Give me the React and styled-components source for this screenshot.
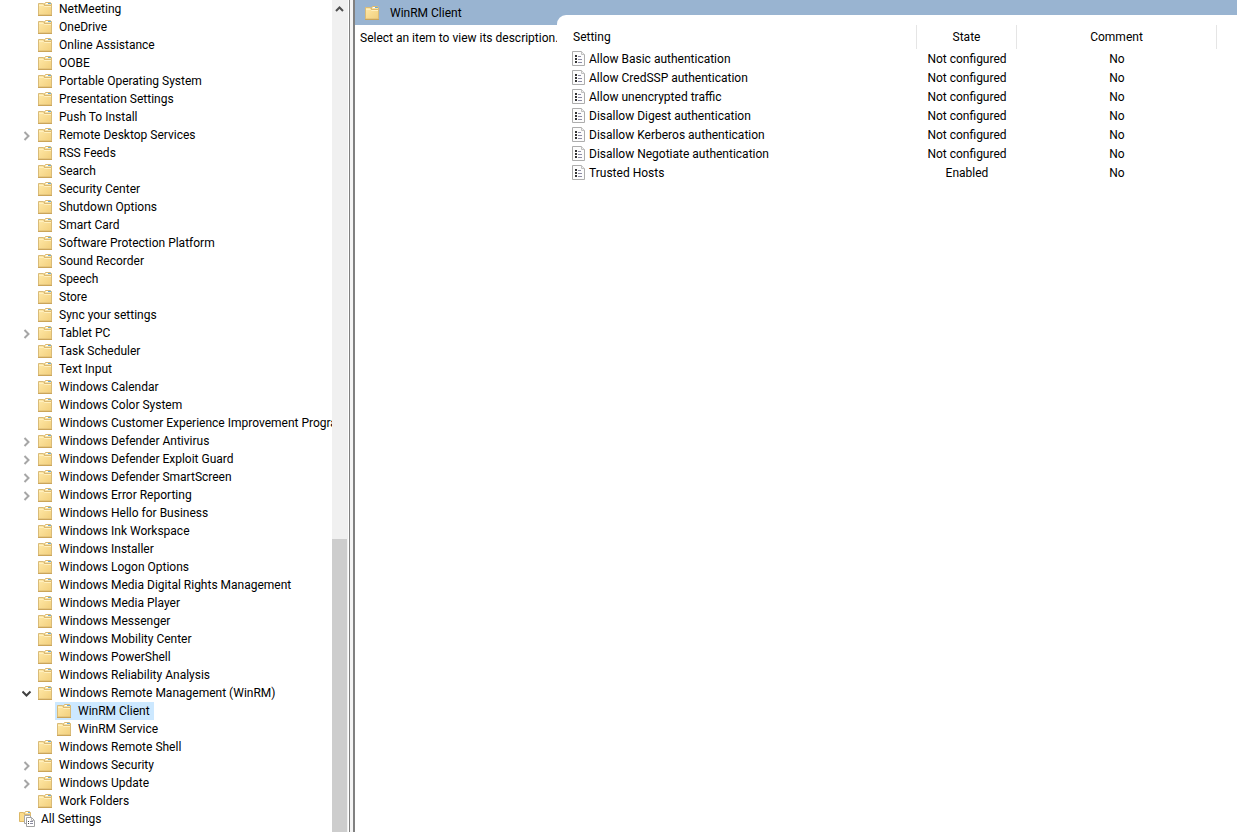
import React, {useState} from 'react';
import styled, {createGlobalStyle} from 'styled-components';

const theme = {
    text: '#000000',
    header: '#99b4d1',
    selected: '#cce8ff',
    track: '#f0f0f0',
    thumb: '#cdcdcd',
    divider: '#e5e5e5',
};

const GlobalStyle = createGlobalStyle`
  * {
    box-sizing: border-box;
  }

  body {
    margin: 0;
    background: white;
    color: ${theme.text};
    font-family: "Segoe UI", Roboto, "Open Sans", sans-serif;
    font-size: 12px;
    line-height: 18px;
  }

  button {
    padding: 0;
    border: none;
    background: none;
    color: inherit;
    font: inherit;
    text-align: left;
  }
`;

const Window = styled.div`
  display: flex;
  height: 100vh;
  overflow: hidden;
`;

const TreePane = styled.nav`
  display: flex;
  flex: 0 0 348px;
  min-width: 0;
`;

const TreeList = styled.ul`
  flex: 1;
  min-width: 0;
  margin: 0;
  padding: 0;
  list-style: none;
  overflow: hidden;
`;

const TreeRow = styled.li`
  display: flex;
  align-items: center;
  height: 18px;
  padding-left: ${({$level}) => $level * 19}px;
  white-space: nowrap;
`;

const Expander = styled.button`
  display: flex;
  align-items: center;
  flex: 0 0 17px;
  height: 18px;
  padding: 2px 0 0 3px;
`;

const ExpanderSpace = styled.span`
  flex: 0 0 17px;
`;

const TreeItem = styled.button`
  display: flex;
  align-items: center;
  flex-shrink: 0;
  gap: 6px;
  height: 18px;
  padding: 0 4px 0 2px;
  background: ${({$selected}) => $selected ? theme.selected : 'transparent'};
`;

const ScrollTrack = styled.div`
  display: flex;
  flex-direction: column;
  flex: 0 0 16px;
  padding-right: 1px;
  background: ${theme.track};
`;

const ScrollArrow = styled.button`
  display: flex;
  justify-content: center;
  align-items: center;
  height: 18px;
`;

const ScrollThumb = styled.div`
  flex: 1;
  margin-top: ${({$offset}) => $offset};
  background: ${theme.thumb};
`;

const Splitter = styled.div`
  flex: 0 0 6px;
  margin-left: 1px;
  border: solid #808080;
  border-width: 0 2px 0 1px;
  background: #f4f4f4;
`;

const DetailPane = styled.main`
  display: grid;
  grid-template-columns: 202px 1fr;
  grid-template-rows: 15px 10px 1fr;
  flex: 1;
  min-width: 0;
  background: linear-gradient(${theme.header} 25px, white 25px);
`;

const PaneTitle = styled.h1`
  display: flex;
  align-items: center;
  grid-area: 1 / 1 / 3 / 2;
  gap: 10px;
  margin: 0;
  padding-left: 10px;
  font-size: 12px;
  font-weight: 400;
`;

const Description = styled.p`
  grid-area: 3 / 1 / 4 / 2;
  margin: 0;
  padding: 4px 0 0 5px;
  white-space: nowrap;
`;

const SettingsPanel = styled.section`
  grid-area: 2 / 2 / 4 / 3;
  min-width: 0;
  padding-top: 10px;
  border-top-left-radius: 9px;
  background: white;
  overflow: hidden;
`;

const SettingsTable = styled.table`
  width: 660px;
  table-layout: fixed;
  border-collapse: separate;
  border-spacing: 0;
`;

const Column = styled.col`
  width: ${({$width}) => $width}px;
`;

const HeadCell = styled.th`
  height: 24px;
  padding: 0 0 0 ${({$first}) => $first ? 16 : 0}px;
  border-right: 1px solid ${theme.divider};
  font-weight: 400;
  text-align: ${({$first}) => $first ? 'left' : 'center'};
`;

const Cell = styled.td`
  height: 19px;
  padding: 0;
  text-align: center;
`;

const SettingName = styled.button`
  display: flex;
  align-items: center;
  gap: 4px;
  height: 19px;
  padding-left: 15px;
`;

const FolderIcon = () => (
    <svg width="15" height="14" viewBox="0 0 15 14" aria-hidden="true">
        <defs>
            <linearGradient id="folderFill" x1="0" y1="0" x2="1" y2="1">
                <stop offset="0" stopColor="#ffe9a8"/>
                <stop offset="1" stopColor="#f2cf7c"/>
            </linearGradient>
        </defs>
        <path d="M.5 13V1.5h5l1 2h7V13z" fill="url(#folderFill)" stroke="#d9bb78"/>
        <path d="M6.5 3.5v-2l1-1h5l1 1v2z" fill="#f8e3a6" stroke="#dcb970"/>
        <path d="M8 1.5h2" stroke="#fff"/>
        <path d="M10 1.5h3" stroke="#6cabd9"/>
        <path d="M1 3.5h4.5l1 1H13" fill="none" stroke="#fff0c0"/>
        <path d="M0 13.5h14" stroke="#cba55a"/>
    </svg>
);

const AllSettingsIcon = () => (
    <svg width="16" height="16" viewBox="0 0 16 16" aria-hidden="true">
        <path d="M.5 10.5v-9h4l1 2h6v7z" fill="#fbdc8c" stroke="#dcb866"/>
        <path d="M5.5 3.5v-2l1-1h4l1 1v2z" fill="#f8e3a6" stroke="#dcb970"/>
        <path d="M7 1.5h2" stroke="#fff"/>
        <path d="M9 1.5h2" stroke="#6cabd9"/>
        <path d="M5.5 12.5v-8h5l2 2v6z" fill="#fff" stroke="#a8a8a8"/>
        <path d="M7.5 15.5v-9h5l3 3v6z" fill="#fff" stroke="#a0a0a0"/>
        <path d="M12.5 6.5v3h3" fill="none" stroke="#b8b8b8"/>
        <path d="M9 10.5h1M9 12.5h1" stroke="#444"/>
        <path d="M11 10.5h3M11 12.5h3" stroke="#8b8ba0"/>
    </svg>
);

const PolicyIcon = () => (
    <svg width="13" height="15" viewBox="0 0 13 15" aria-hidden="true">
        <path d="M.5 14.5V.5h9l3 3v11z" fill="#fcfcfc" stroke="#adadad"/>
        <path d="M9.5.5v3h3" fill="#eee" stroke="#c0c0c0"/>
        <path d="M3 5h2M3 8h2M3 11h2" stroke="#333" strokeWidth="2"/>
        <path d="M6 5.5h3M6 8.5h4M6 11.5h4" stroke="#8c8ca5"/>
    </svg>
);

const ChevronIcon = ({open}) => (
    <svg width="10" height="10" viewBox="0 0 10 10" fill="none" strokeWidth="2" aria-hidden="true">
        {open
            ? <path d="M.5 2.5l4 4 4-4" stroke="#404040"/>
            : <path d="M2.5 1l4 4-4 4" stroke="#a6a6a6"/>}
    </svg>
);

const ArrowUpIcon = () => (
    <svg width="9" height="6" viewBox="0 0 9 6" fill="none" aria-hidden="true">
        <path d="M1 5l3.5-3.5L8 5" stroke="#505050" strokeWidth="2"/>
    </svg>
);

const folder = (name, state) => ({name, level: 1, state});

const treeItems = [
    folder('NetMeeting'),
    folder('OneDrive'),
    folder('Online Assistance'),
    folder('OOBE'),
    folder('Portable Operating System'),
    folder('Presentation Settings'),
    folder('Push To Install'),
    folder('Remote Desktop Services', 'closed'),
    folder('RSS Feeds'),
    folder('Search'),
    folder('Security Center'),
    folder('Shutdown Options'),
    folder('Smart Card'),
    folder('Software Protection Platform'),
    folder('Sound Recorder'),
    folder('Speech'),
    folder('Store'),
    folder('Sync your settings'),
    folder('Tablet PC', 'closed'),
    folder('Task Scheduler'),
    folder('Text Input'),
    folder('Windows Calendar'),
    folder('Windows Color System'),
    folder('Windows Customer Experience Improvement Program'),
    folder('Windows Defender Antivirus', 'closed'),
    folder('Windows Defender Exploit Guard', 'closed'),
    folder('Windows Defender SmartScreen', 'closed'),
    folder('Windows Error Reporting', 'closed'),
    folder('Windows Hello for Business'),
    folder('Windows Ink Workspace'),
    folder('Windows Installer'),
    folder('Windows Logon Options'),
    folder('Windows Media Digital Rights Management'),
    folder('Windows Media Player'),
    folder('Windows Messenger'),
    folder('Windows Mobility Center'),
    folder('Windows PowerShell'),
    folder('Windows Reliability Analysis'),
    folder('Windows Remote Management (WinRM)', 'open'),
    {name: 'WinRM Client', level: 2},
    {name: 'WinRM Service', level: 2},
    folder('Windows Remote Shell'),
    folder('Windows Security', 'closed'),
    folder('Windows Update', 'closed'),
    folder('Work Folders'),
    {name: 'All Settings', level: 0, icon: 'settings'},
];

const settings = [
    {name: 'Allow Basic authentication', state: 'Not configured', comment: 'No'},
    {name: 'Allow CredSSP authentication', state: 'Not configured', comment: 'No'},
    {name: 'Allow unencrypted traffic', state: 'Not configured', comment: 'No'},
    {name: 'Disallow Digest authentication', state: 'Not configured', comment: 'No'},
    {name: 'Disallow Kerberos authentication', state: 'Not configured', comment: 'No'},
    {name: 'Disallow Negotiate authentication', state: 'Not configured', comment: 'No'},
    {name: 'Trusted Hosts', state: 'Enabled', comment: 'No'},
];

const App = () => {
    const [selected, setSelected] = useState('WinRM Client');

    return (
        <>
            <GlobalStyle/>
            <Window>
                <TreePane aria-label="Policy tree">
                    <TreeList>
                        {treeItems.map(item => (
                            <TreeRow key={item.name} $level={item.level}>
                                {item.state
                                    ? <Expander aria-label={`Toggle ${item.name}`} aria-expanded={item.state === 'open'}>
                                        <ChevronIcon open={item.state === 'open'}/>
                                    </Expander>
                                    : <ExpanderSpace/>}
                                <TreeItem $selected={item.name === selected} onClick={() => setSelected(item.name)}>
                                    {item.icon === 'settings' ? <AllSettingsIcon/> : <FolderIcon/>}
                                    {item.name}
                                </TreeItem>
                            </TreeRow>
                        ))}
                    </TreeList>
                    <ScrollTrack>
                        <ScrollArrow aria-label="Scroll up"><ArrowUpIcon/></ScrollArrow>
                        <ScrollThumb $offset="calc(65vh - 20px)"/>
                    </ScrollTrack>
                </TreePane>
                <Splitter/>
                <DetailPane>
                    <PaneTitle><FolderIcon/>WinRM Client</PaneTitle>
                    <Description>Select an item to view its description.</Description>
                    <SettingsPanel>
                        <SettingsTable>
                            <colgroup>
                                <Column $width={360}/>
                                <Column $width={100}/>
                                <Column $width={200}/>
                            </colgroup>
                            <thead>
                                <tr>
                                    <HeadCell $first>Setting</HeadCell>
                                    <HeadCell>State</HeadCell>
                                    <HeadCell>Comment</HeadCell>
                                </tr>
                            </thead>
                            <tbody>
                                {settings.map(setting => (
                                    <tr key={setting.name}>
                                        <Cell><SettingName><PolicyIcon/>{setting.name}</SettingName></Cell>
                                        <Cell>{setting.state}</Cell>
                                        <Cell>{setting.comment}</Cell>
                                    </tr>
                                ))}
                            </tbody>
                        </SettingsTable>
                    </SettingsPanel>
                </DetailPane>
            </Window>
        </>
    );
};

export default App;
